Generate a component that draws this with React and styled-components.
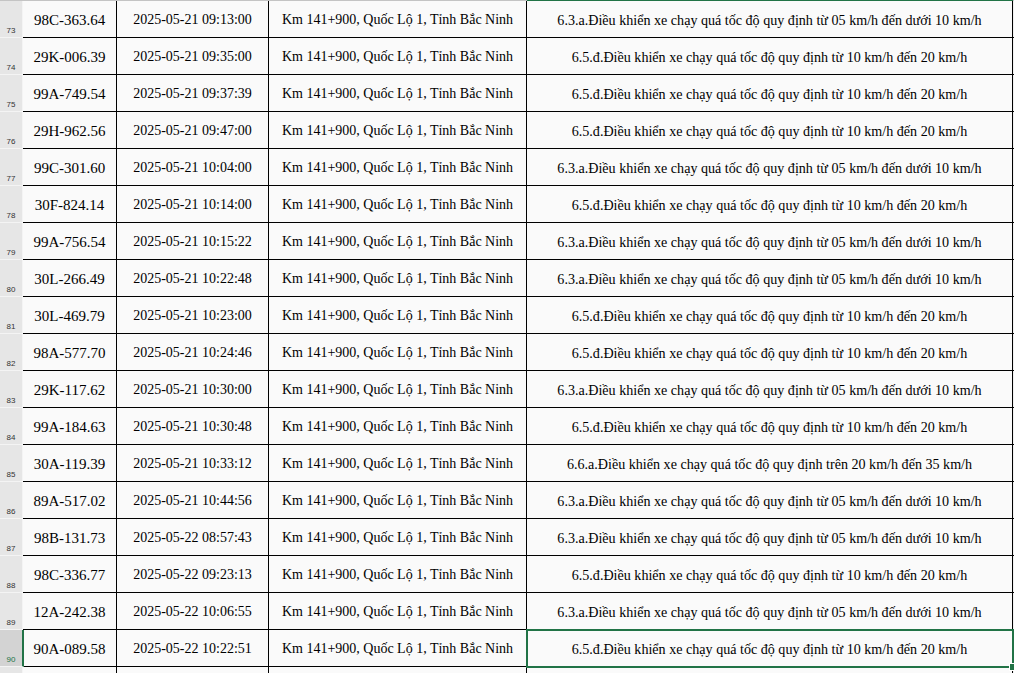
import React from 'react';
import styled, { createGlobalStyle } from 'styled-components';

const GlobalStyle = createGlobalStyle`
  html, body {
    margin: 0;
    padding: 0;
    background: #ffffff;
    overflow: hidden;
  }
`;

const green = '#217346';

const Sheet = styled.div`
  display: grid;
  grid-template-columns: 23px 94px 152px 258px 486px 1px;
  grid-auto-rows: 37px;
  grid-template-rows: 1px;
  width: 1014px;
  height: 673px;
  overflow: hidden;
  background: #fafafa;
  font-family: 'Liberation Serif', 'Times New Roman', serif;
  color: #000;
`;

const TopEdge = styled.div`
  background: ${props => (props.active ? green : '#c4c4c4')};
`;

const RowHeader = styled.div`
  display: flex;
  align-items: flex-end;
  justify-content: center;
  padding-bottom: 2px;
  box-sizing: border-box;
  background: ${props => (props.selected ? '#d3d3d3' : '#e6e6e6')};
  border-bottom: 1px solid #f4f4f4;
  border-right: ${props =>
    props.selected ? `2px solid ${green}` : '1px solid #f4f4f4'};
  margin-right: ${props => (props.selected ? '-1px' : '0')};
  position: relative;
  z-index: ${props => (props.selected ? 1 : 0)};
  color: ${props => (props.selected ? green : '#333')};
  font-family: 'Liberation Sans', Arial, sans-serif;
  font-size: 8px;
  line-height: 1;
`;

const Cell = styled.div`
  display: flex;
  align-items: center;
  justify-content: center;
  padding-top: 2px;
  box-sizing: border-box;
  border-right: 1px solid #000;
  border-bottom: 1px solid #000;
  font-size: ${props => props.size || 14}px;
  white-space: nowrap;
  position: relative;
  background: #fafafa;
  outline: ${props => (props.selected ? `2px solid ${green}` : 'none')};
  outline-offset: -1px;
  z-index: ${props => (props.selected ? 2 : 0)};
`;

const Handle = styled.span`
  position: absolute;
  right: -3px;
  bottom: -5px;
  width: 5px;
  height: 6px;
  background: ${green};
  border: 1px solid #fff;
  border-right: none;
`;

const Rest = styled.div`
  background: #f0f0f0;
  border-bottom: 1px solid #000;
`;

const A = '6.3.a.Điều khiển xe chạy quá tốc độ quy định từ 05 km/h đến dưới 10 km/h';
const D = '6.5.đ.Điều khiển xe chạy quá tốc độ quy định từ 10 km/h đến 20 km/h';
const E = '6.6.a.Điều khiển xe chạy quá tốc độ quy định trên 20 km/h đến 35 km/h';
const PLACE = 'Km 141+900, Quốc Lộ 1, Tỉnh Bắc Ninh';

const rows = [
  [73, '98C-363.64', '2025-05-21 09:13:00', A],
  [74, '29K-006.39', '2025-05-21 09:35:00', D],
  [75, '99A-749.54', '2025-05-21 09:37:39', D],
  [76, '29H-962.56', '2025-05-21 09:47:00', D],
  [77, '99C-301.60', '2025-05-21 10:04:00', A],
  [78, '30F-824.14', '2025-05-21 10:14:00', D],
  [79, '99A-756.54', '2025-05-21 10:15:22', A],
  [80, '30L-266.49', '2025-05-21 10:22:48', A],
  [81, '30L-469.79', '2025-05-21 10:23:00', D],
  [82, '98A-577.70', '2025-05-21 10:24:46', D],
  [83, '29K-117.62', '2025-05-21 10:30:00', A],
  [84, '99A-184.63', '2025-05-21 10:30:48', D],
  [85, '30A-119.39', '2025-05-21 10:33:12', E],
  [86, '89A-517.02', '2025-05-21 10:44:56', A],
  [87, '98B-131.73', '2025-05-22 08:57:43', A],
  [88, '98C-336.77', '2025-05-22 09:23:13', D],
  [89, '12A-242.38', '2025-05-22 10:06:55', A],
  [90, '90A-089.58', '2025-05-22 10:22:51', D],
];

export default function App() {
  return (
    <>
      <GlobalStyle />
      <Sheet>
        <TopEdge />
        <TopEdge />
        <TopEdge />
        <TopEdge />
        <TopEdge active />
        <TopEdge />
        {rows.map(([num, plate, time, rule]) => {
          const selected = num === 90;
          return (
            <React.Fragment key={num}>
              <RowHeader selected={selected}>{num}</RowHeader>
              <Cell size={15}>{plate}</Cell>
              <Cell>{time}</Cell>
              <Cell>{PLACE}</Cell>
              <Cell selected={selected} size={14.1}>
                {rule}
                {selected && <Handle />}
              </Cell>
              <Rest />
            </React.Fragment>
          );
        })}
        <RowHeader />
        <Cell />
        <Cell />
        <Cell />
        <Cell />
        <Rest />
      </Sheet>
    </>
  );
}
